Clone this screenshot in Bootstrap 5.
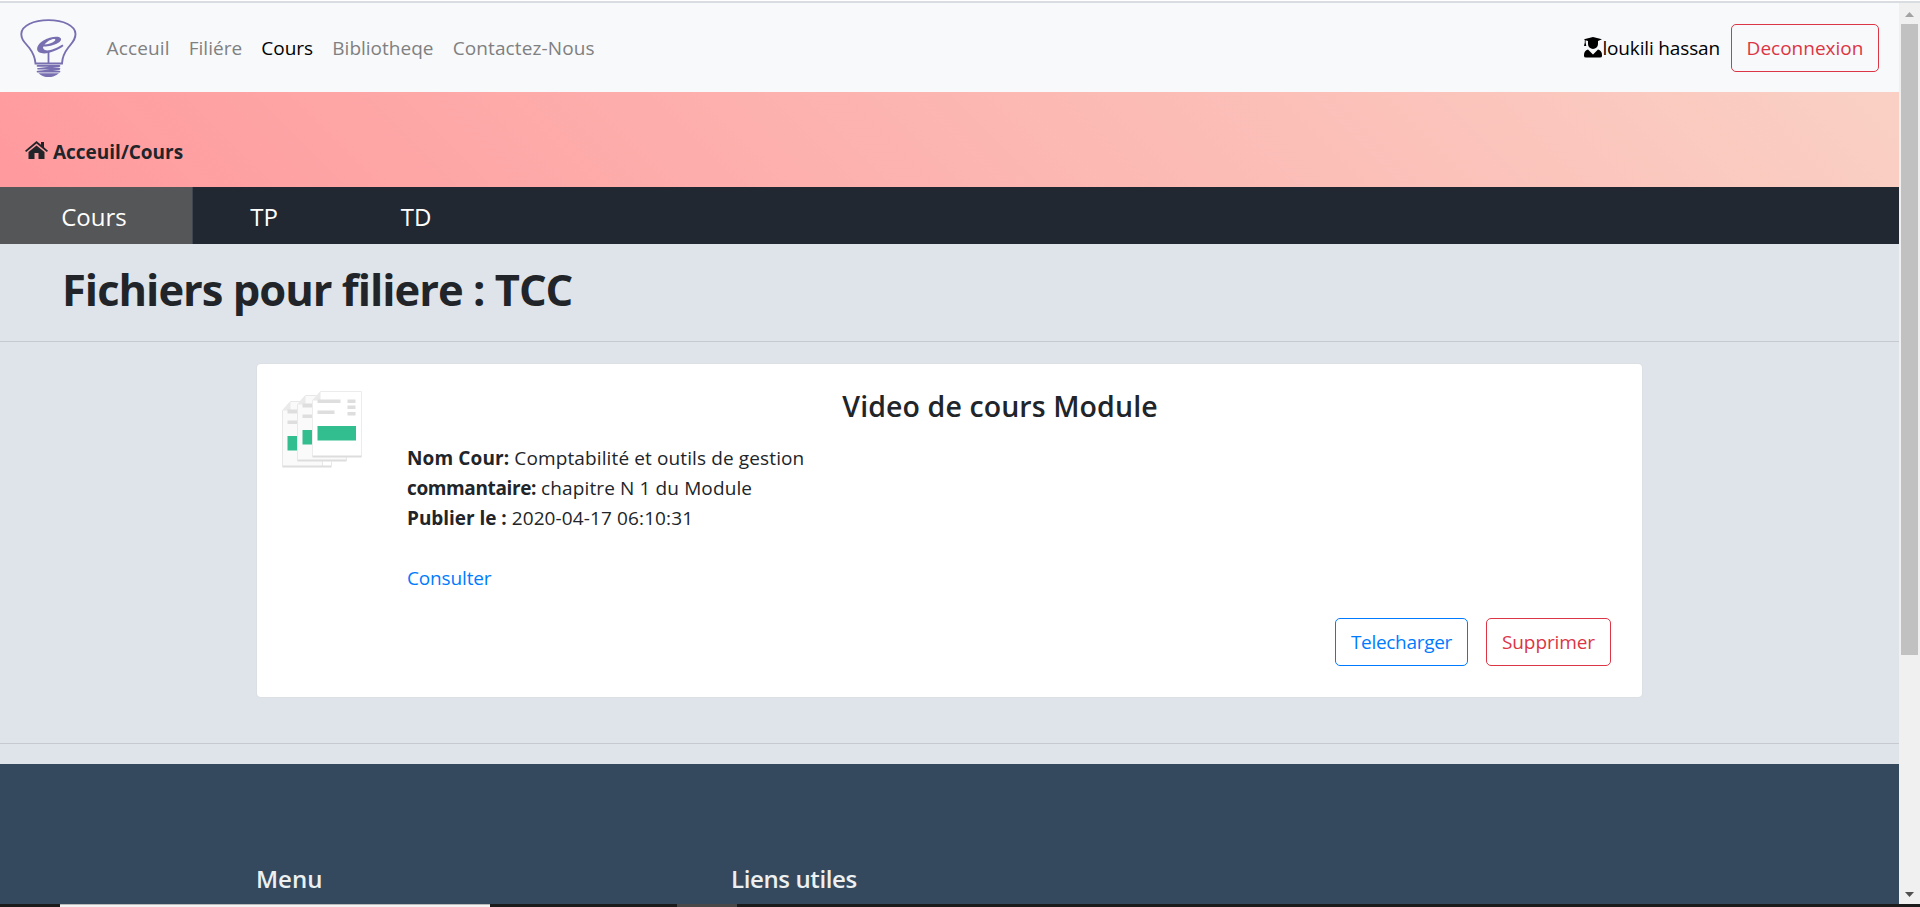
<!DOCTYPE html>
<html lang="fr">
<head>
<meta charset="utf-8">
<meta name="viewport" content="width=device-width, initial-scale=1">
<title>Cours</title>
<link href="https://cdn.jsdelivr.net/npm/bootstrap@5.3.0/dist/css/bootstrap.min.css" rel="stylesheet">
<style>
html,body{height:100%;overflow:hidden}
body{font-family:"Open Sans","Noto Sans",sans-serif;font-size:19px;line-height:30px;color:#212529;background:#dfe3ea}
a{text-decoration:none}
.topline{height:3px;background:linear-gradient(#fff 1px,#d9dce0 1px)}
.page{width:1899px;height:901px;overflow:hidden}
.site-nav{height:89px;padding:0 20px;background:#f8f9fb}
.menu-links{margin-left:20px}
.site-nav .nav-link{padding:0 9.6px;color:#7f8081}
.site-nav .nav-link.active{color:#000}
.spaced{letter-spacing:.12px}
.user{color:#000;letter-spacing:-.15px}
.btn{--bs-btn-font-size:19px;--bs-btn-line-height:30px;--bs-btn-padding-y:8px;--bs-btn-padding-x:0;--bs-btn-border-radius:5px;height:48px}
.btn-outline-danger{--bs-btn-color:#dc3545;--bs-btn-border-color:#dc3545}
.btn-outline-primary{--bs-btn-color:#007bff;--bs-btn-border-color:#007bff}
.btn-logout{width:148px;margin-left:11px}
.crumbs{height:95px;padding:45px 0 0 25px;background:linear-gradient(45deg,#ff9a9e 0%,#fad0c4 99%,#fad0c4 100%)}
.tabs{height:57px;background:#222831}
.tabs a{color:#fff;font-size:24px;line-height:60px;height:57px;width:150px}
.tabs a.active{width:193px;background:#555657;border-right:1px solid #3f4650}
.heading{height:97px;padding:15px 0 0 62px;font-size:43.5px;line-height:61px;font-weight:700;letter-spacing:-1px;margin:0}
.rule{height:1px;background:#c6cad0}
.course{width:1385px;height:333px;margin:22px 0 46px 257px;border:0;border-radius:4px;box-shadow:0 0 0 1px #dcdfe3;padding:24px 31px 31px 25px}
.course-body{margin-left:43px}
.course-title{font-size:28.5px;line-height:36px;font-weight:600;letter-spacing:.1px;margin:0 0 19px;padding-right:18px}
.info{letter-spacing:.12px}
.tight{letter-spacing:-.38px}
.slight{letter-spacing:-.05px}
.course-link{color:#007bff;letter-spacing:-.15px;margin:30px 0 25px}
.btn-get{width:133px;letter-spacing:-.3px}
.btn-del{width:125px;letter-spacing:-.1px;margin-left:18px}
.footer-bar{height:140px;margin-top:20px;background:#34495e;color:#ecf0f1;padding:100px 0 0 256px;font-size:24px;font-weight:600}
.footer-bar .foot-col{width:475px}
.task{height:3px;background:#1b1b1b}
.task .win{width:430px;margin-left:60px;background:#f3f3f3;border-top:1px solid #bbb}
.task .app{width:60px;margin-left:187px;background:#484848}
.scroller{width:21px;height:901px;background:#f0f0f0}
.thumb{width:17px;height:631px;background:#c1c1c1}
</style>
</head>
<body>
<div class="topline"></div>
<div class="d-flex">
<div class="page">
<nav class="site-nav d-flex align-items-center">
<svg width="57" height="58" viewBox="0 0 57 60" preserveAspectRatio="none" fill="none" stroke="#776fb0">
<path stroke-width="1.900" d="M15.500 46C15 39 13.500 35.500 9 29.500C4.500 24 1.300 21.500 1.300 15.500C1.300 7 13.500 1.200 28.500 1.200S55.500 7 55.500 15.500C55.500 21.500 52.500 24 48.300 29.500C43.800 35.500 42.300 39 42 46Z"/>
<path stroke-width="1.800" d="M28.500 46V33"/>
<path stroke-width="1.700" stroke-linecap="round" d="M17.500 48.500H39.500M18 51.500H39.500M17.500 54.500H39.500M19 51.500L39 49M18 54.500L39 52"/>
<path fill="#776fb0" stroke="none" d="M18.500 56H39Q34 60 28.500 60T18.500 56Z"/>
<path fill="#776fb0" stroke="none" fill-rule="evenodd" d="M23 28.700C31 28.500 42 25 41 20.500C40 17 30 18 23 22.500C17 26.500 15.500 32 19 34.500C25 38 37 33 43.500 28L42.500 26.500C35 31.500 28 33.500 25 32C23 31 23 29.500 23 28.700ZM24.500 26.500C27 22.500 33 19.800 35 20.800C37 22.500 31 26 24.500 26.500Z"/>
</svg>
<div class="menu-links d-flex flex-grow-1">
<a class="nav-link spaced" href="#">Acceuil</a><a class="nav-link" href="#">Filiére</a><a class="nav-link active" href="#">Cours</a><a class="nav-link" href="#">Bibliotheqe</a><a class="nav-link spaced" href="#">Contactez-Nous</a>
</div>
<svg width="18" height="21" viewBox="0 0 18 21"><path d="M0 2.300 9 0 18 2.300 14 4V7A5 5 0 0 1 4 7V4L1.600 3.300V5.500L2.300 9H0L.8 5.500V3ZM4 12.500 9 17.500 14 12.500Q18 13.500 18 18V19Q18 20.500 16 20.500H2Q0 20.500 0 19V18Q0 13.500 4 12.500Z"/></svg>
<span class="user">loukili hassan</span>
<a class="btn btn-outline-danger btn-logout" href="#">Deconnexion</a>
</nav>
<div class="crumbs fw-bold"><svg width="23" height="18" viewBox="0 0 23 18" fill="#212529" class="align-baseline"><path d="M11.500 0 16 3.700V1H19V6.300L23 9.700 21.800 11 11.500 2.500 1.200 11 0 9.700ZM11.500 4.500 19.500 11V18H13.500V12H9.500V18H3.500V11Z"/></svg> Acceuil/Cours</div>
<div class="tabs d-flex text-center"><a class="active pe-1" href="#">Cours</a><a class="pe-2" href="#">TP</a><a class="pe-1" href="#">TD</a></div>
<h1 class="heading">Fichiers pour filiere : TCC</h1>
<div class="rule"></div>
<div class="card course flex-row">
<svg width="82" height="80" viewBox="0 -1 82 80" class="flex-shrink-0">
<g transform="translate(.5 12.500)"><path d="M0 9 8 0H40V65H0Z" fill="#fafafa" stroke="#e8e8e8"/><path d="M0 65H49" stroke="#ddd" stroke-width="2"/><path d="M49 60V65" stroke="#e8e8e8"/><path d="M0 9 8 0V9Z" fill="#eaeaea"/><path d="M5 8H20V12H5ZM5 19H20V22.500H5Z" fill="#dedede"/><path d="M5 34.500H20V49H5Z" fill="#33be90"/></g>
<g transform="translate(15.500 6.500)"><path d="M0 9 8 0H49V65H0Z" fill="#fafafa" stroke="#e8e8e8"/><path d="M0 65H49" stroke="#ddd" stroke-width="2"/><path d="M0 9 8 0V9Z" fill="#eaeaea"/><path d="M5 8H20V12H5ZM5 19H20V22.500H5Z" fill="#dedede"/><path d="M5 34.500H20V49H5Z" fill="#33be90"/></g>
<g transform="translate(30.500 2.500)"><path d="M0 9 8 0H49V65H0Z" fill="#fff" stroke="#ececec"/><path d="M0 65H49" stroke="#ddd" stroke-width="2"/><path d="M0 9 8 0V9Z" fill="#eaeaea"/><path d="M5 8H28V11.500H5ZM5 19H22V22.500H5ZM35 8H43V11.500H35ZM35 14H43V17.500H35ZM35 20.500H43V24H35Z" fill="#dedede"/><path d="M5 34.500H43.500V49H5Z" fill="#33be90"/></g>
</svg>
<div class="course-body flex-grow-1 d-flex flex-column">
<h2 class="course-title text-center">Video de cours Module</h2>
<div class="info"><b>Nom Cour:</b> Comptabilité et outils de gestion</div>
<div class="info"><b class="tight">commantaire:</b> chapitre N 1 du Module</div>
<div class="info"><b class="slight">Publier le :</b> 2020-04-17 06:10:31</div>
<a class="course-link" href="#">Consulter</a>
<div class="d-flex justify-content-end"><a class="btn btn-outline-primary btn-get" href="#">Telecharger</a><a class="btn btn-outline-danger btn-del" href="#">Supprimer</a></div>
</div>
</div>
<div class="rule"></div>
<div class="footer-bar d-flex"><div class="foot-col">Menu</div><div class="tight">Liens utiles</div></div>
</div>
<div class="scroller d-flex flex-column align-items-center">
<svg width="9" height="21" viewBox="0 0 9 21"><path d="M0 14 4.500 9 9 14Z" fill="#a3a3a3"/></svg>
<div class="thumb"></div>
<svg class="mt-auto" width="9" height="13" viewBox="0 0 9 13"><path d="M0 1 4.500 6 9 1Z" fill="#505050"/></svg>
</div>
</div>
<div class="task d-flex"><div class="win"></div><div class="app"></div></div>
<script src="https://cdn.jsdelivr.net/npm/bootstrap@5.3.0/dist/js/bootstrap.bundle.min.js"></script>
</body>
</html>
